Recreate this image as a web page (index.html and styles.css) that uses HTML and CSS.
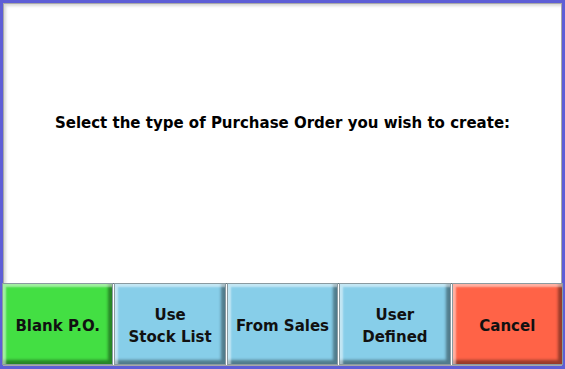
FILE: index.html
```html
<!DOCTYPE html>
<html lang="en">
<head>
    <meta charset="UTF-8">
    <title>Purchase Order</title>
    <link rel="stylesheet" href="styles.css">
</head>
<body>
    <div class="window">
        <div class="message">
            <p>Select the type of Purchase Order you wish to create:</p>
        </div>
        <div class="buttons">
            <button class="btn green">Blank P.O.</button>
            <button class="btn blue">Use<br>Stock List</button>
            <button class="btn blue">From Sales</button>
            <button class="btn blue">User<br>Defined</button>
            <button class="btn red">Cancel</button>
        </div>
    </div>
</body>
</html>
```

FILE: styles.css
```css
html, body {
    margin: 0;
    padding: 0;
}
body {
    font-family: "DejaVu Sans", Verdana, sans-serif;
    background: #ffffff;
}
.window {
    width: 565px;
    height: 369px;
    box-sizing: border-box;
    border: 3px solid #5e5ed6;
    background: #ffffff;
    box-shadow: inset 1px 1px 0 #a8a8a8, inset -1px -1px 0 #a8a8a8, inset 3px 3px 3px #d8d8d8;
    display: flex;
    flex-direction: column;
}
.message {
    flex: 1;
    display: flex;
    justify-content: center;
}
.message p {
    margin: 111px 0 0;
    font-size: 15px;
    font-weight: bold;
    color: #000000;
}
.buttons {
    display: flex;
    gap: 3px;
    padding: 0 0 2px 0;
    border-top: 1px solid #6a7a80;
}
.btn {
    flex: 1;
    height: 80px;
    border: none;
    margin: 0;
    padding: 4px 0 0;
    font-family: inherit;
    font-size: 15px;
    font-weight: bold;
    line-height: 22px;
    color: #111111;
    outline: 1px solid #8a9aa0;
    box-shadow: inset 3px 3px 2px rgba(255, 255, 255, 0.5), inset -4px -4px 3px rgba(0, 0, 0, 0.4);
}
.green {
    background: #43df43;
}
.blue {
    background: #87cee9;
}
.red {
    background: #ff6347;
}
```
